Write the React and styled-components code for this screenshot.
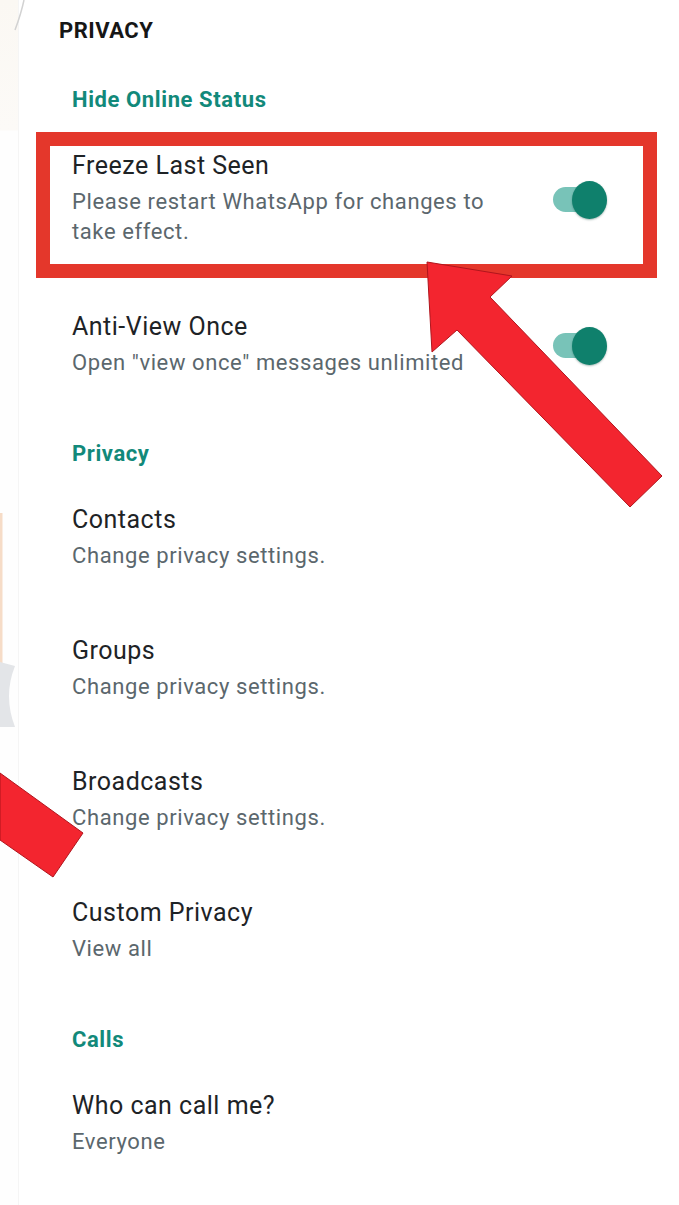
import styled, { createGlobalStyle } from "styled-components";

const GlobalStyle = createGlobalStyle`
  html, body {
    margin: 0;
    padding: 0;
    background: #fff;
  }
  body {
    font-family: Roboto, "Noto Sans", "Liberation Sans", sans-serif;
  }
`;

const Page = styled.div`
  position: relative;
  display: flex;
  width: 679px;
  min-height: 1205px;
  background: #fff;
  overflow: hidden;
`;

const Edge = styled.div`
  width: 18px;
  flex-shrink: 0;
  background: linear-gradient(#fbf8f3 0, #fcfaf7 130px, #fefefe 131px, #fefefe 100%);
  border-right: 1px solid #f5f5f5;
`;

const Content = styled.div`
  flex: 1;
  padding: 16px 72px 40px 40px;
`;

const PageTitle = styled.div`
  font-size: 22px;
  line-height: 30px;
  font-weight: 700;
  letter-spacing: 0.5px;
  color: #161616;
  margin-bottom: 11px;
`;

const Section = styled.div`
  padding-left: 13px;
`;

const SectionHeader = styled.div`
  padding: 28px 0 4px;
  font-size: 22px;
  line-height: 30px;
  font-weight: 700;
  letter-spacing: 0.6px;
  color: #12897a;
`;

const Row = styled.div`
  display: flex;
  align-items: center;
  justify-content: space-between;
  padding: 33px 0;
`;

const RowText = styled.div`
  display: flex;
  flex-direction: column;
  gap: 7px;
  max-width: 430px;
`;

const RowTitle = styled.div`
  font-size: 25px;
  line-height: 28px;
  letter-spacing: 0.5px;
  color: #1e2326;
`;

const RowSub = styled.div`
  font-size: 22px;
  line-height: 30px;
  letter-spacing: 0.6px;
  color: #5b676d;
`;

const Switch = styled.div`
  position: relative;
  width: 54px;
  height: 38px;
  flex-shrink: 0;
`;

const Track = styled.div`
  position: absolute;
  left: 0;
  top: 6px;
  width: 46px;
  height: 25px;
  border-radius: 13px;
  background: #78c3b8;
`;

const Thumb = styled.div`
  position: absolute;
  right: 0;
  top: 0;
  width: 35px;
  height: 38px;
  border-radius: 50%;
  background: #0f806c;
  box-shadow: 0 1px 2px rgba(0, 60, 50, 0.35);
`;

const HighlightBox = styled.div`
  position: absolute;
  left: 36px;
  top: 132px;
  width: 621px;
  height: 146px;
  box-sizing: border-box;
  border: 14px solid #e4372b;
  pointer-events: none;
`;

const Overlay = styled.svg`
  position: absolute;
  left: 0;
  top: 0;
  pointer-events: none;
`;

function Toggle() {
  return (
    <Switch>
      <Track />
      <Thumb />
    </Switch>
  );
}

function Item({ title, sub, toggle }) {
  return (
    <Row>
      <RowText>
        <RowTitle>{title}</RowTitle>
        <RowSub>{sub}</RowSub>
      </RowText>
      {toggle && <Toggle />}
    </Row>
  );
}

const sections = [
  {
    title: "Hide Online Status",
    items: [
      { title: "Freeze Last Seen", sub: "Please restart WhatsApp for changes to take effect.", toggle: true },
      { title: "Anti-View Once", sub: "Open \"view once\" messages unlimited", toggle: true },
    ],
  },
  {
    title: "Privacy",
    items: [
      { title: "Contacts", sub: "Change privacy settings." },
      { title: "Groups", sub: "Change privacy settings." },
      { title: "Broadcasts", sub: "Change privacy settings." },
      { title: "Custom Privacy", sub: "View all" },
    ],
  },
  {
    title: "Calls",
    items: [{ title: "Who can call me?", sub: "Everyone" }],
  },
];

export default function App() {
  return (
    <>
      <GlobalStyle />
      <Page>
        <Edge />
        <Content>
          <PageTitle>PRIVACY</PageTitle>
          {sections.map((s) => (
            <Section key={s.title}>
              <SectionHeader>{s.title}</SectionHeader>
              {s.items.map((it) => (
                <Item key={it.title} {...it} />
              ))}
            </Section>
          ))}
        </Content>

        <HighlightBox />
        <Overlay width="679" height="1205" viewBox="0 0 679 1205">
          {/* background leftovers on the left edge */}
          <path d="M24 0 Q21 14 15 30" fill="none" stroke="#d2d2d2" strokeWidth="1.5" />
          <rect x="0" y="513" width="2.5" height="150" fill="#f6dcc7" />
          <path d="M0 662 L15 666 Q3 696 15 727 L0 727 Z" fill="#e3e5e8" />
          {/* annotation arrows */}
          <polygon
            points="427,262 512,276 490,297 662,476 630,507 457,330 432,352"
            fill="#f3252f"
            stroke="#b0151d"
            strokeWidth="1"
            strokeLinejoin="round"
          />
          <polygon
            points="0,773 83,833 53,877 0,840"
            fill="#f3252f"
            stroke="#b0151d"
            strokeWidth="1"
          />
        </Overlay>
      </Page>
    </>
  );
}
